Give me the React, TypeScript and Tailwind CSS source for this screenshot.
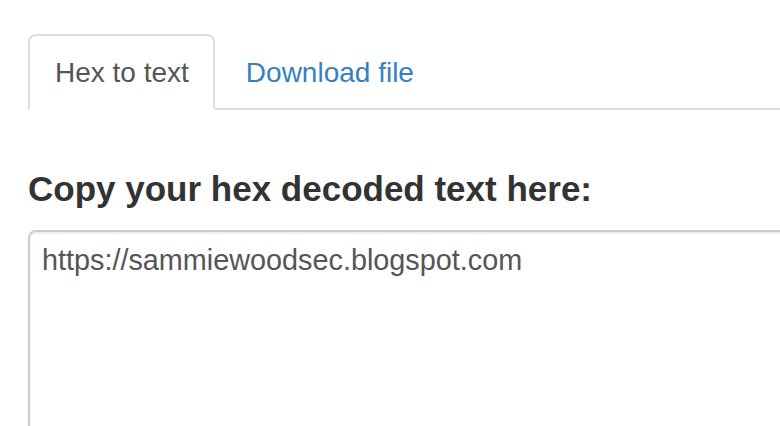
import { useState } from 'react'

export default function App() {
  const [tab, setTab] = useState<'hex' | 'download'>('hex')
  const [text, setText] = useState('https://sammiewoodsec.blogspot.com')

  const active =
    'block pl-[25px] pr-[24px] pt-[18px] pb-[17px] text-[28px] leading-[37px] text-[#555555] bg-white border-2 border-[#dddddd] border-b-transparent rounded-t-[8px]'
  const idle =
    'block pl-[25px] pr-[24px] pt-[18px] pb-[17px] text-[28px] leading-[37px] text-[#3580c2] border-2 border-transparent rounded-t-[8px]'

  return (
    <div
      className="w-[780px] h-[426px] overflow-hidden bg-white"
      style={{ fontFamily: '"Liberation Sans", Arial, sans-serif' }}
    >
      <div className="pl-[28px] pt-[34px] w-[1000px]">
        {/* Tabs */}
        <ul className="flex border-b-2 border-[#dddddd]">
          <li className="-mb-[2px] mr-[4px]">
            <button onClick={() => setTab('hex')} className={tab === 'hex' ? active : idle}>
              Hex to text
            </button>
          </li>
          <li className="-mb-[2px]">
            <button onClick={() => setTab('download')} className={tab === 'download' ? active : idle}>
              Download file
            </button>
          </li>
        </ul>

        {/* Form */}
        <h3 className="mt-[59px] text-[35px] leading-[40px] font-bold text-[#333333]">
          Copy your hex decoded text here:
        </h3>
        <textarea
          value={text}
          onChange={e => setText(e.target.value)}
          className="mt-[21px] block w-[900px] h-[260px] border-2 border-[#cccccc] rounded-[8px] px-[12px] pt-[11px] pb-[10px] text-[28.8px] leading-[34px] text-[#555555] shadow-[inset_0_2px_2px_rgba(0,0,0,0.075)] outline-none resize-none"
          style={{ fontFamily: '"Liberation Sans", Arial, sans-serif' }}
        />
      </div>
    </div>
  )
}
